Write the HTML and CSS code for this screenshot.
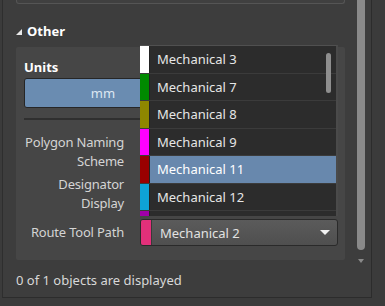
FILE: index.html
```html
<!DOCTYPE html>
<html lang="en">
<head>
    <meta charset="UTF-8">
    <meta name="viewport" content="width=device-width, initial-scale=1.0">
    <title>Properties - Other</title>
    <link rel="stylesheet" href="styles.css">
</head>
<body>
    <div class="frame">
        <div class="pane">
            <div class="top-box"></div>

            <div class="section-head">
                <span class="tri"></span>
                <span>Other</span>
            </div>

            <div class="group">
                <div class="units-label">Units</div>
                <div class="segment">
                    <div class="seg active">mm</div>
                    <div class="seg">mils</div>
                </div>
                <div class="sep"></div>

                <div class="field-row">
                    <div class="field-label">Polygon Naming<br>Scheme</div>
                    <div class="field-ctrl"></div>
                </div>
                <div class="field-row row-designator">
                    <div class="field-label">Designator<br>Display</div>
                    <div class="field-ctrl"></div>
                </div>
                <div class="field-row row-route">
                    <div class="field-label">Route Tool Path</div>
                    <div class="combo">
                        <span class="combo-swatch"></span>
                        <span class="combo-text">Mechanical 2</span>
                        <span class="combo-arrow"></span>
                    </div>
                </div>
            </div>

            <div class="status">0 of 1 objects are displayed</div>

            <!-- open layer list of the Route Tool Path combo -->
            <div class="layer-list">
                <div class="layer"><span class="swatch sw-white"></span><span class="layer-name">Mechanical 3</span></div>
                <div class="layer"><span class="swatch sw-green"></span><span class="layer-name">Mechanical 7</span></div>
                <div class="layer"><span class="swatch sw-olive"></span><span class="layer-name">Mechanical 8</span></div>
                <div class="layer"><span class="swatch sw-magenta"></span><span class="layer-name">Mechanical 9</span></div>
                <div class="layer selected"><span class="swatch sw-maroon"></span><span class="layer-name">Mechanical 11</span></div>
                <div class="layer"><span class="swatch sw-cyan"></span><span class="layer-name">Mechanical 12</span></div>
                <div class="layer"><span class="swatch sw-purple"></span></div>
                <div class="list-thumb"></div>
            </div>
        </div>

        <div class="vscroll">
            <div class="vthumb"></div>
            <div class="varrow"></div>
        </div>
    </div>
</body>
</html>
```

FILE: styles.css
```css
* {
    margin: 0;
    padding: 0;
    box-sizing: border-box;
}

body {
    width: 385px;
    height: 306px;
    overflow: hidden;
    background-color: #3b3b3b;
    font-family: "Noto Sans", "Open Sans", sans-serif;
    font-size: 13px;
    color: #d6d6d6;
}

.frame {
    display: flex;
    width: 370px;
    height: 298px;
    margin-left: 2px;
    border-left: 1px solid #2e2e2e;
    border-right: 1px solid #2c2c2c;
    border-bottom: 1px solid #2c2c2c;
    background-color: #3d3d3d;
}

.pane {
    position: relative;
    width: 351px;
    padding-left: 13px;
    display: flex;
    flex-direction: column;
}

.top-box {
    width: 329px;
    height: 4px;
    border: 1px solid #555555;
    border-top: none;
    border-radius: 0 0 3px 3px;
    background-color: #404040;
}

.section-head {
    display: flex;
    align-items: center;
    margin-top: 18px;
    height: 18px;
    line-height: 18px;
    font-weight: bold;
    color: #ffffff;
}

.tri {
    width: 0;
    height: 0;
    border-left: 6px solid transparent;
    border-bottom: 6px solid #e8e8e8;
    margin-right: 5px;
    margin-top: 1px;
}

.group {
    margin-top: 7px;
    width: 329px;
    height: 213px;
    padding: 11px 7px 0 8px;
    background-color: #464646;
    border-radius: 2px;
}

.units-label {
    line-height: 18px;
    font-weight: bold;
    color: #ffffff;
}

.segment {
    display: flex;
    margin-top: 2px;
    height: 30px;
    border: 1px solid #262626;
    border-radius: 3px;
    overflow: hidden;
}

.seg {
    flex: 1;
    display: flex;
    align-items: center;
    justify-content: center;
    background-color: #505050;
    color: #d0d0d0;
}

.seg.active {
    background-color: #6a8cb1;
    color: #dde7f2;
}

.sep {
    margin-top: 10px;
    height: 2px;
    background-color: #2f2f2f;
}

.field-row {
    display: grid;
    grid-template-columns: 110px 198px;
    column-gap: 16px;
    align-items: center;
    margin-top: 13px;
    margin-left: -10px;
}

.row-designator {
    margin-top: 4px;
}

.row-route {
    margin-top: 6px;
}

.field-label {
    text-align: right;
    line-height: 19px;
    white-space: nowrap;
    letter-spacing: -0.2px;
    color: #d4d4d4;
}

.field-ctrl {
    height: 27px;
}

.combo {
    display: flex;
    align-items: center;
    height: 27px;
    border: 1px solid #2a2a2a;
    border-radius: 3px;
    overflow: hidden;
    background: linear-gradient(#5b5b5b, #4f4f4f);
    color: #e2e2e2;
}

.combo-swatch {
    width: 11px;
    height: 100%;
    background-color: #e2307a;
    border-right: 1px solid #3a3a3a;
}

.combo-text {
    flex: 1;
    padding-left: 8px;
}

.combo-arrow {
    width: 0;
    height: 0;
    margin-right: 7px;
    border-left: 5px solid transparent;
    border-right: 5px solid transparent;
    border-top: 5px solid #f2f2f2;
}

.status {
    margin-top: 11px;
    line-height: 18px;
    color: #d8d8d8;
}

/* dropdown list lies over the group */
.layer-list {
    position: absolute;
    left: 137px;
    top: 45px;
    width: 198px;
    height: 171px;
    overflow: hidden;
    background-color: #2c2c2c;
    border-right: 2px solid #4a4a4a;
    border-top: 1px solid #505050;
}

.layer {
    display: flex;
    align-items: center;
    height: 27.5px;
    border-bottom: 1px solid #3b3b3b;
    color: #e6e6e6;
}

.layer.selected {
    background-color: #6888ad;
    color: #ffffff;
}

.swatch {
    width: 10px;
    height: 100%;
    margin-right: 7px;
    border-right: 1px solid #222222;
}

.layer-name {
    line-height: 18px;
}

.sw-white { background-color: #ffffff; }
.sw-green { background-color: #008a00; }
.sw-olive { background-color: #8e8700; }
.sw-magenta { background-color: #ff00ff; }
.sw-maroon { background-color: #990000; }
.sw-cyan { background-color: #0ea2d6; }
.sw-purple { background-color: #a000a8; }

.list-thumb {
    position: absolute;
    left: 186px;
    top: 7px;
    width: 5px;
    height: 40px;
    border-radius: 3px;
    background-color: #8e8e8e;
}

.vscroll {
    width: 15px;
    padding-left: 3px;
    display: flex;
    flex-direction: column;
    align-items: flex-start;
}

.vthumb {
    width: 8px;
    height: 250px;
    border-radius: 0 0 4px 4px;
    background-color: #8a8a8a;
}

.varrow {
    margin-top: 9px;
    margin-left: 1px;
    width: 0;
    height: 0;
    border-left: 3px solid transparent;
    border-right: 3px solid transparent;
    border-top: 4px solid #8a8a8a;
}
```
